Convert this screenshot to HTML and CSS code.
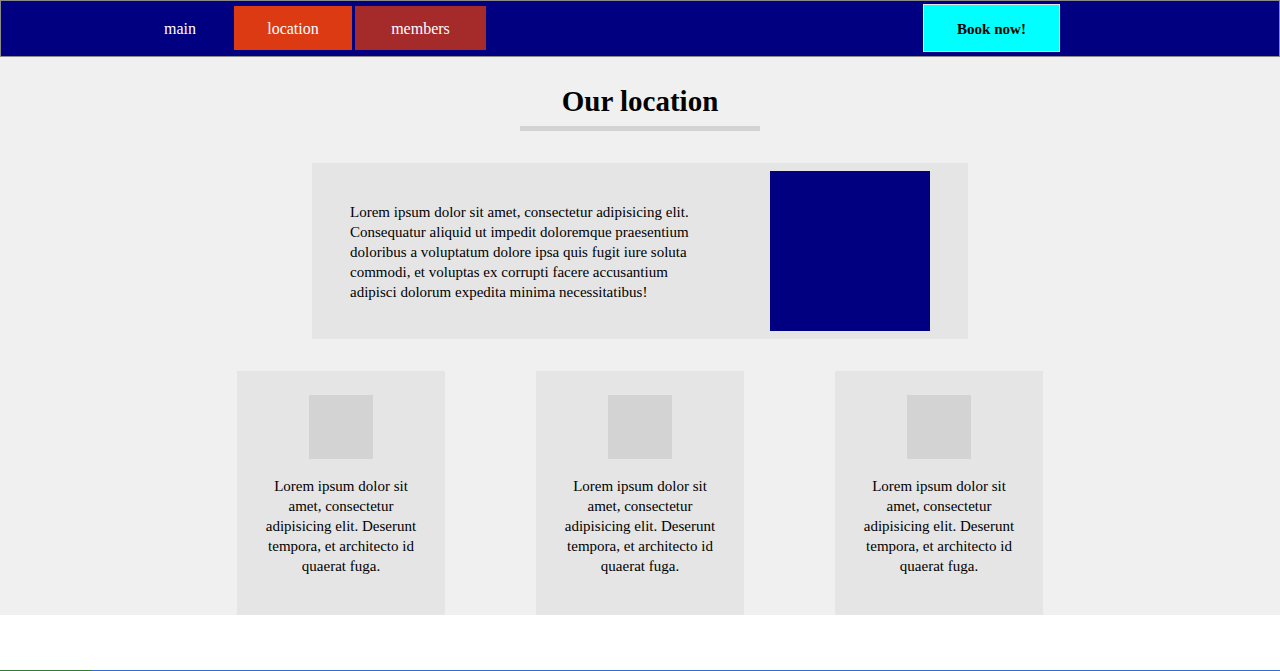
FILE: index.html
```html
<!DOCTYPE html>
<html lang="en">
<head>
<meta charset="utf-8">
<title>Our location</title>
<link rel="stylesheet" href="styles.css">
</head>
<body>
<nav class="topnav">
  <div class="links">
    <a class="link link-main" href="#">main</a>
    <a class="link link-location" href="#">location</a>
    <a class="link link-members" href="#">members</a>
  </div>
  <button class="book">Book now!</button>
</nav>
<main class="page">
  <h1 class="title">Our location</h1>
  <div class="title-bar"></div>
  <section class="location">
    <p class="location-text">Lorem ipsum dolor sit amet, consectetur adipisicing elit. Consequatur aliquid ut impedit doloremque praesentium doloribus a voluptatum dolore ipsa quis fugit iure soluta commodi, et voluptas ex corrupti facere accusantium adipisci dolorum expedita minima necessitatibus!</p>
    <div class="map"></div>
  </section>
  <section class="cards">
    <div class="card">
      <div class="card-img"></div>
      <p class="card-text">Lorem ipsum dolor sit amet, consectetur adipisicing elit. Deserunt tempora, et architecto id quaerat fuga.</p>
    </div>
    <div class="card">
      <div class="card-img"></div>
      <p class="card-text">Lorem ipsum dolor sit amet, consectetur adipisicing elit. Deserunt tempora, et architecto id quaerat fuga.</p>
    </div>
    <div class="card">
      <div class="card-img"></div>
      <p class="card-text">Lorem ipsum dolor sit amet, consectetur adipisicing elit. Deserunt tempora, et architecto id quaerat fuga.</p>
    </div>
  </section>
</main>
<div class="loadbar"><div class="loadbar-done"></div><div class="loadbar-rest"></div></div>
</body>
</html>
```
FILE: styles.css
```css
html, body {
  margin: 0;
  padding: 0;
  background: #ffffff;
  font-family: "Liberation Serif", "Times New Roman", serif;
  color: #000;
}

.topnav {
  display: flex;
  align-items: flex-start;
  height: 55px;
  background: #000080;
  border: 1px solid #8a8a8a;
  padding: 0 219px 0 129px;
}

.links {
  display: flex;
  align-items: center;
  margin-top: 5px;
}

.link {
  display: flex;
  align-items: center;
  justify-content: center;
  height: 44px;
  box-sizing: border-box;
  padding-top: 2px;
  color: #fff;
  text-decoration: none;
  font-size: 16px;
}

.link-main {
  width: 100px;
}

.link-location {
  width: 118px;
  margin-left: 4px;
  background: #db3a12;
}

.link-members {
  width: 131px;
  margin-left: 3px;
  background: #a52a2a;
}

.book {
  margin-left: auto;
  margin-top: 3px;
  width: 137px;
  height: 48px;
  background: #00ffff;
  border: 1px solid #e4e4e4;
  font-family: "Liberation Serif", "Times New Roman", serif;
  font-weight: bold;
  font-size: 15px;
  color: #000;
  padding: 2px 0 0;
}

.page {
  height: 558px;
  background: #f0f0f0;
  display: flex;
  flex-direction: column;
  align-items: center;
  padding-top: 27px;
  box-sizing: border-box;
  overflow: hidden;
}

.title {
  margin: 0;
  font-size: 29px;
  line-height: 34px;
  font-weight: bold;
}

.title-bar {
  width: 240px;
  height: 5px;
  background: #d3d3d3;
  margin-top: 8px;
}

.location {
  margin-top: 32px;
  width: 656px;
  box-sizing: border-box;
  padding: 8px 38px;
  background: #e5e5e5;
  display: flex;
  align-items: center;
  justify-content: space-between;
}

.location-text {
  margin: 0;
  padding-top: 2px;
  width: 340px;
  font-size: 15px;
  line-height: 20px;
}

.map {
  width: 160px;
  height: 160px;
  background: #000080;
}

.cards {
  margin-top: 32px;
  flex: 1;
  display: flex;
  gap: 91px;
  align-items: stretch;
}

.card {
  width: 208px;
  box-sizing: border-box;
  padding: 24px 24px 0;
  background: #e5e5e5;
  display: flex;
  flex-direction: column;
  align-items: center;
}

.card-img {
  width: 64px;
  height: 64px;
  background: #d3d3d3;
}

.card-text {
  margin: 17px 0 0;
  font-size: 15px;
  line-height: 20px;
  text-align: center;
}

.loadbar {
  position: fixed;
  left: 0;
  right: 0;
  bottom: 0;
  height: 1px;
  display: flex;
}

.loadbar-done {
  width: 92px;
  background: #2e7d32;
}

.loadbar-rest {
  flex: 1;
  background: #2f6fd6;
}
```
